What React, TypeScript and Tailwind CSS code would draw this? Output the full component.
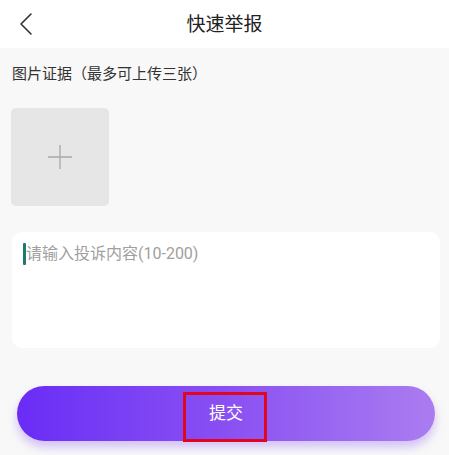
import React from 'react'

const font = { fontFamily: 'Roboto, "Noto Sans CJK SC", "Noto Sans", sans-serif' }

export default function App() {
  return (
    <div className="w-[449px] h-[455px] bg-[#f8f8f8] overflow-hidden" style={font}>
      {/* 顶部栏 */}
      <div className="relative h-12 bg-white flex items-center justify-center">
        <button className="absolute left-[14px] top-[12px] w-6 h-6 flex items-center justify-center">
          <svg width="16" height="24" viewBox="0 0 16 24" fill="none">
            <path d="M13 2 L3 12 L13 22" stroke="#333" strokeWidth="1.6" strokeLinecap="round" strokeLinejoin="round" />
          </svg>
        </button>
        <h1 className="text-[19px] text-[#222] leading-none">快速举报</h1>
      </div>

      <div className="px-3 pt-[14px]">
        <p className="text-[15px] text-[#333] leading-6">图片证据（最多可上传三张）</p>

        <div className="mt-[22px] w-[98px] h-[98px] ml-[-1px] rounded-[5px] bg-[#e6e6e6] flex items-center justify-center">
          <svg width="26" height="26" viewBox="0 0 26 26">
            <path d="M13 1 V25 M1 13 H25" stroke="#a8a8a8" strokeWidth="1.3" />
          </svg>
        </div>

        <div className="mt-[26px] h-[116px] w-[428px] bg-white rounded-[10px] px-[11px] pt-[10px]">
          <div className="flex items-center">
            <span className="w-[3px] h-[22px] bg-[#1f7a6a] rounded-[1px]" />
            <span className="text-[16px] text-[#a0a0a0] leading-6">请输入投诉内容(10-200)</span>
          </div>
        </div>
      </div>

      <div className="px-[17px] mt-[38px]">
        <button className="relative w-[418px] h-[55px] rounded-full bg-gradient-to-r from-[#6a2bf6] via-[#8a4ff2] to-[#ab7cf0] shadow-[0_6px_10px_rgba(140,90,240,0.35)] flex items-center justify-center">
          <span className="text-[17px] text-white">提交</span>
          <span className="absolute left-[166px] top-[6px] w-[84px] h-[50px] border-[3px] border-[#e0061f]" />
        </button>
      </div>
    </div>
  )
}
